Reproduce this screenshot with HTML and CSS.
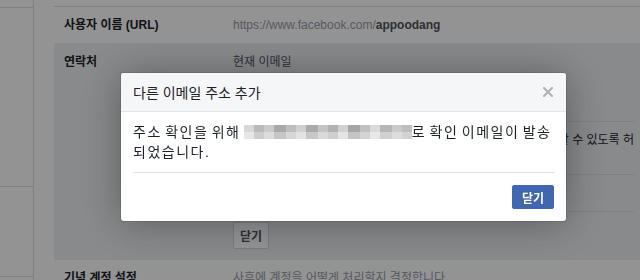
FILE: index.html
```html
<!DOCTYPE html>
<html>
<head>
  <title>이메일 주소 추가</title>
  <meta name="viewport" content="width=device-width, initial-scale=1.0">
  <link rel="stylesheet" href="styles.css">
</head>
<body>
  <div class="page">
    <aside class="sidebar">
      <div class="side-item first"></div>
      <div class="side-item second"></div>
      <div class="side-item third"></div>
    </aside>

    <main class="settings">
      <div class="row top-row"></div>

      <div class="row">
        <div class="label">사용자 이름 (URL)</div>
        <div class="value url">https://www.facebook.com/<b>appoodang</b></div>
      </div>

      <div class="row open">
        <div class="label">연락처</div>
        <div class="value editor">
          <div class="current">현재 이메일</div>
          <div class="email-list"></div>
          <div class="notice">
            <p>추가한 이메일 주소는 페이스북의 내 친구들이 회원님을 찾고 연락할 수 있도록 허용됩니다</p>
          </div>
          <div class="add-link"></div>
          <button class="plain">닫기</button>
        </div>
      </div>

      <div class="row">
        <div class="label">기념 계정 설정</div>
        <div class="value muted">사후에 계정을 어떻게 처리할지 결정합니다.</div>
      </div>
    </main>
  </div>

  <div class="overlay"></div>

  <div class="dialog">
    <div class="dialog-head">
      <h3>다른 이메일 주소 추가</h3>
      <svg class="close" width="10" height="10" viewBox="0 0 10 10">
        <path d="M1 1 L9 9 M9 1 L1 9" stroke="#b0b3b8" stroke-width="2.2" stroke-linecap="square"/>
      </svg>
    </div>
    <div class="dialog-body">
      <p>주소 확인을 위해 <span class="blur"></span>로 확인 이메일이 발송 되었습니다.</p>
    </div>
    <div class="dialog-foot">
      <button class="primary">닫기</button>
    </div>
  </div>
</body>
</html>
```

FILE: styles.css
```css
* {
  box-sizing: border-box;
  margin: 0;
  padding: 0;
}

body {
  font-family: "Liberation Sans", "Noto Sans CJK KR", sans-serif;
  font-size: 12px;
  color: #1d2129;
  background-color: #f5f6f7;
  overflow: hidden;
}

.page {
  display: flex;
  height: 280px;
}

/* left menu */
.sidebar {
  flex-shrink: 0;
  width: 34px;
  border-right: 1px solid #d3d6db;
}

.side-item {
  border-bottom: 1px solid #d3d6db;
}

.side-item.first { height: 8px; }
.side-item.second { height: 179px; }
.side-item.third { height: 90px; }

/* settings list */
.settings {
  flex: 1;
  min-width: 0;
  padding-left: 20px;
}

.row {
  display: flex;
  align-items: center;
  height: 36px;
  padding-left: 10px;
}

.row.top-row {
  height: 7px;
  border-bottom: 1px solid #d3d6db;
}

.label {
  flex-shrink: 0;
  width: 169px;
  font-weight: bold;
  line-height: 16px;
}

.value {
  flex: 1;
  min-width: 0;
  line-height: 16px;
  white-space: nowrap;
}

.url {
  color: #90949c;
}

.url b {
  color: #4b4f56;
}

.muted {
  color: #90949c;
}

.row.open {
  align-items: flex-start;
  height: 217px;
  padding-top: 11px;
  background-color: #e4e6e9;
}

.editor {
  padding-right: 6px;
}

.current {
  color: #4b4f56;
}

.email-list {
  height: 52px;
  border-bottom: 1px solid #d3d6db;
}

.notice {
  height: 53px;
  padding-top: 10px;
  border-bottom: 1px solid #d3d6db;
}

.notice p {
  overflow: hidden;
  color: #1d2129;
}

.add-link {
  height: 37px;
  border-bottom: 1px solid #d3d6db;
}

button.plain {
  margin-top: 10px;
  height: 27px;
  padding: 0 6px;
  border: 1px solid #ccd0d5;
  border-radius: 2px;
  background-color: #f6f7f9;
  color: #4b4f56;
  font-family: inherit;
  font-size: 12px;
  font-weight: bold;
}

/* modal */
.overlay {
  position: fixed;
  inset: 0;
  background-color: rgba(0, 0, 0, 0.4);
}

.dialog {
  position: fixed;
  left: 121px;
  top: 73px;
  width: 445px;
  background-color: white;
  border-radius: 3px;
  box-shadow: 0 2px 40px rgba(0, 0, 0, 0.35), 0 0 0 1px rgba(0, 0, 0, 0.1);
  overflow: hidden;
}

.dialog-head {
  display: flex;
  align-items: center;
  justify-content: space-between;
  height: 39px;
  padding: 0 13px 0 12px;
  background-color: #f5f6f7;
  border-bottom: 1px solid #e5e5e5;
}

.dialog-head h3 {
  font-size: 14px;
  font-weight: normal;
  color: #1d2129;
}

.dialog-body {
  margin: 0 12px;
  padding: 10px 0;
  border-bottom: 1px solid #dddfe2;
  font-size: 14px;
  letter-spacing: 1.5px;
  word-spacing: -2px;
  line-height: 20px;
  word-break: keep-all;
}

.blur {
  display: inline-block;
  width: 168px;
  height: 14px;
  vertical-align: -2px;
  background-image:
    linear-gradient(90deg, #d8d8d8 0 6%, #b9b9b9 6% 12%, #c9c9c9 12% 18%, #a9a9a9 18% 25%, #bdbdbd 25% 31%, #cfcfcf 31% 37%, #aaaaaa 37% 44%, #c4c4c4 44% 50%, #b2b2b2 50% 56%, #d2d2d2 56% 62%, #a6a6a6 62% 69%, #c0c0c0 69% 75%, #dadada 75% 81%, #b5b5b5 81% 88%, #cacaca 88% 94%, #bebebe 94% 100%),
    linear-gradient(90deg, #e6e6e6 0 6%, #cdcdcd 6% 12%, #dcdcdc 12% 18%, #c6c6c6 18% 25%, #d6d6d6 25% 31%, #e2e2e2 31% 37%, #c8c8c8 37% 44%, #d9d9d9 44% 50%, #cfcfcf 50% 56%, #e4e4e4 56% 62%, #c3c3c3 62% 69%, #d4d4d4 69% 75%, #e8e8e8 75% 81%, #d0d0d0 81% 88%, #dddddd 88% 94%, #d3d3d3 94% 100%);
  background-size: 100% 50%;
  background-position: top, bottom;
  background-repeat: no-repeat;
}

.dialog-foot {
  display: flex;
  justify-content: flex-end;
  padding: 12px;
}

button.primary {
  width: 42px;
  height: 24px;
  border: 1px solid #4267b2;
  border-radius: 2px;
  background-color: #4267b2;
  color: white;
  font-family: inherit;
  font-size: 12px;
  font-weight: bold;
}
```
